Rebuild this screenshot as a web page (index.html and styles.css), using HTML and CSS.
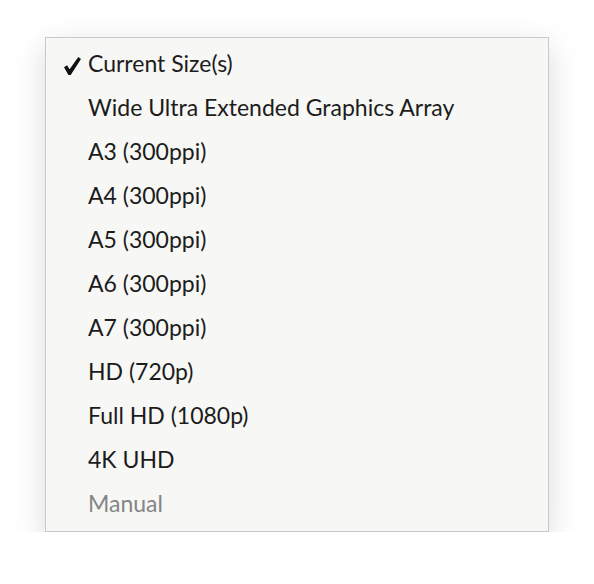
FILE: index.html
```html
<!DOCTYPE html>
<html>
<head>
<meta charset="utf-8">
<link rel="stylesheet" href="styles.css">
</head>
<body>
<div class="stage">
  <ul class="menu">
    <li class="item checked"><svg class="check" viewBox="0 0 17 18" width="17" height="18"><polygon points="0,10.2 3,8.3 5.6,12.3 14.3,0 17,1.9 6.7,18 4.4,18"/></svg>Current Size(s)</li>
    <li class="item">Wide Ultra Extended Graphics Array</li>
    <li class="item">A3 (300ppi)</li>
    <li class="item">A4 (300ppi)</li>
    <li class="item">A5 (300ppi)</li>
    <li class="item">A6 (300ppi)</li>
    <li class="item">A7 (300ppi)</li>
    <li class="item">HD (720p)</li>
    <li class="item">Full HD (1080p)</li>
    <li class="item">4K UHD</li>
    <li class="item disabled">Manual</li>
  </ul>
</div>
</body>
</html>
```
FILE: styles.css
```css
html, body {
  margin: 0;
  padding: 0;
  background: #ffffff;
}
.stage {
  padding: 37px 0 0 45px;
}
.menu {
  list-style: none;
  margin: 0;
  width: 502px;
  padding: 3px 0 6px 0;
  background: #f7f7f5;
  border: 1px solid #c9c9c9;
  box-shadow: 0 10px 30px rgba(0, 0, 0, 0.15);
  font-family: "Lato", "Noto Sans", sans-serif;
  font-size: 23px;
  color: #1c1c1c;
}
.item {
  position: relative;
  height: 44px;
  line-height: 44px;
  padding-left: 42px;
}
.check {
  position: absolute;
  left: 18px;
  top: 16px;
  fill: #111;
}
.disabled {
  color: #858585;
}
```
